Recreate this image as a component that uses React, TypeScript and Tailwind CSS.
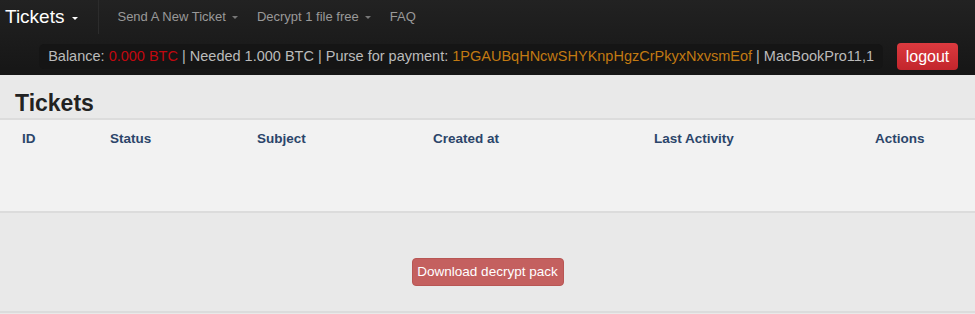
const Caret = ({ className = '' }: { className?: string }) => (
  <span
    className={`inline-block w-0 h-0 border-l-[3.5px] border-r-[3.5px] border-t-[3.5px] border-l-transparent border-r-transparent ${className}`}
  />
);

const columns = ['ID', 'Status', 'Subject', 'Created at', 'Last Activity', 'Actions'];

export default function App() {
  return (
    <div className="min-h-screen bg-[#e9e9e9] font-['Liberation_Sans',Arial,sans-serif]">
      {/* Navbar */}
      <nav className="bg-gradient-to-b from-[#222222] to-[#161616] h-[75px]">
        <div className="flex items-center h-[34px]">
          <a href="#" className="flex items-center h-full pl-[5px] pr-[20px] text-white text-[19px] border-r border-[#2c2c2c]">
            Tickets
            <Caret className="ml-[8px] mt-[2px] border-t-white" />
          </a>
          <div className="flex items-center pl-[18px] text-[13px] text-[#999] gap-[19px]">
            <a href="#" className="flex items-center">
              Send A New Ticket
              <Caret className="ml-[6px] mt-[1px] border-t-[#777]" />
            </a>
            <a href="#" className="flex items-center">
              Decrypt 1 file free
              <Caret className="ml-[6px] mt-[1px] border-t-[#777]" />
            </a>
            <a href="#">FAQ</a>
          </div>
        </div>
        <div className="flex items-center justify-end pr-[17px] mt-[9px] gap-[14px]">
          <div className="h-[25px] flex items-center px-[9px] rounded-[5px] bg-[#151515] text-[14.5px] text-[#bbb] whitespace-nowrap">
            Balance:&nbsp;<span className="text-[#c1080f]">0.000 BTC</span>&nbsp;| Needed 1.000 BTC | Purse for payment:&nbsp;
            <span className="text-[#c27a12]">1PGAUBqHNcwSHYKnpHgzCrPkyxNxvsmEof</span>&nbsp;| MacBookPro11,1
          </div>
          <button className="h-[27px] w-[61px] rounded-[4px] bg-gradient-to-b from-[#dc3a3f] to-[#c2252c] text-white text-[16px] leading-none">
            logout
          </button>
        </div>
      </nav>

      {/* Heading */}
      <h1 className="pl-[15px] pt-[17px] pb-[4px] text-[23px] font-bold text-[#222] leading-[22px]">Tickets</h1>

      {/* Table */}
      <div className="border-t-2 border-b-2 border-[#dcdcdc] bg-[#f2f2f2] h-[95px]">
        <div className="grid grid-cols-[88px_147px_176px_221px_221px_1fr] pl-[22px] pt-[9px] text-[13.5px] font-bold text-[#2b456a]">
          {columns.map(c => (
            <div key={c}>{c}</div>
          ))}
        </div>
      </div>

      {/* Download */}
      <div className="flex justify-center pt-[45px] pb-[25px] border-b-2 border-[#dcdcdc]">
        <button className="h-[28px] w-[152px] rounded-[4px] border border-[#b85654] bg-[#c4605f] text-white text-[13.5px]">
          Download decrypt pack
        </button>
      </div>
    </div>
  );
}
